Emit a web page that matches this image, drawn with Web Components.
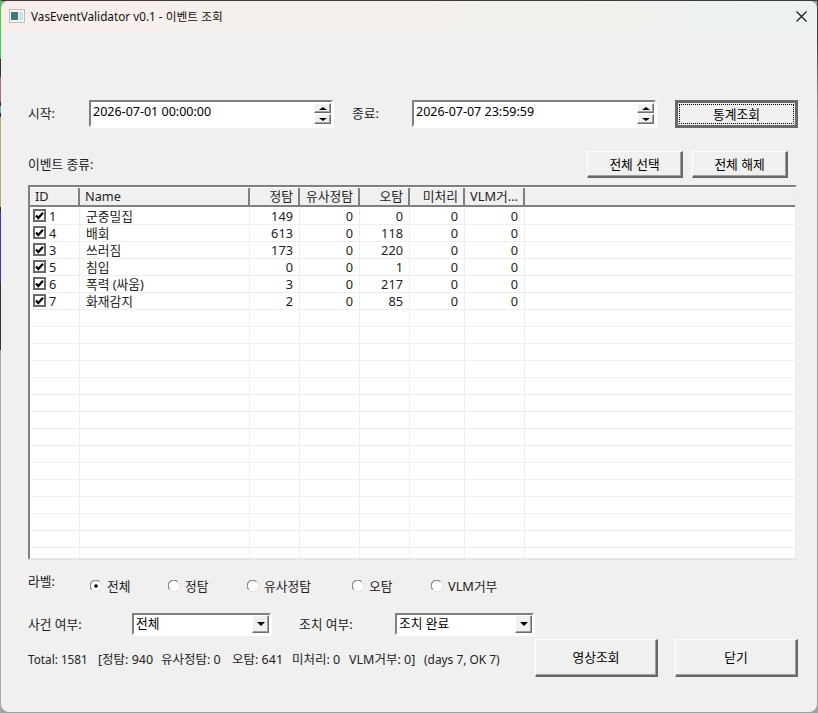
<!DOCTYPE html>
<html>
<head>
<meta charset="utf-8">
<title>VasEventValidator</title>
<style>
    html, body { margin: 0; height: 100%; overflow: hidden; }
    body {
        background:
            linear-gradient(to bottom, #3ecf3e 0 59px, #333 59px 77px, #b56a6a 77px 102px, #333 102px 106px, #5fb8c0 106px 113px, #333 113px 117px, #b8ac60 117px 207px, #333 207px 212px, #3a3ac8 212px 282px, #333 282px 350px, #a8a8a8 350px) left top / 1px 100% no-repeat,
            linear-gradient(#3a3a3a, #3a3a3a) left top / 100% 1px no-repeat,
            linear-gradient(to bottom, #444 0 40px, #a0a0a0 120px) right top / 1px 100% no-repeat,
            #a0a0a0;
    }
</style>
</head>
<body>
<event-window></event-window>
<script>
const font = `"Noto Sans", "Noto Sans CJK KR", sans-serif`;

// raised / sunken win95 edges, shared by the controls
const edges = `
    .raised { background: #f0f0f0; border: 1px solid; border-color: #fff #6d6d6d #6d6d6d #fff; box-shadow: inset -1px -1px 0 #a0a0a0; }
    .sunken { background: #fff; border: 2px solid; border-color: #808080 #fff #fff #808080; box-shadow: 1px 1px 0 #fff; }
`;

class WinButton extends HTMLElement {
    constructor() {
        super();
        const w = this.getAttribute('w');
        const h = this.getAttribute('h');
        this.attachShadow({ mode: 'open' }).innerHTML = `
        <style>
            :host { display: block; width: ${w}px; height: ${h}px; flex: none; }
            .b {
                box-sizing: border-box; width: 100%; height: 100%;
                display: flex; align-items: center; justify-content: center;
                background: #f0f0f0; color: #000;
                border: 2px solid; border-color: #fff #696969 #696969 #fff;
                border-top-width: 1px; border-left-width: 1px;
                box-shadow: inset -1px -1px 0 #a0a0a0;
            }
            :host([focused]) .b { border: 3px solid #696969; box-shadow: none; position: relative; }
            :host([focused]) .b::after { content: ""; position: absolute; inset: 1px; border: 1px dotted #000; }
        </style>
        <div class="b"><slot></slot></div>`;
    }
}
customElements.define('win-button', WinButton);

class DateSpin extends HTMLElement {
    constructor() {
        super();
        this.attachShadow({ mode: 'open' }).innerHTML = `
        <style>
            ${edges}
            :host { display: block; width: 244px; height: 27px; flex: none; font-size: 12.5px; }
            .box { box-sizing: border-box; height: 100%; display: flex; justify-content: space-between; padding-left: 2px; line-height: 19px; }
            .spin { width: 17px; display: flex; flex-direction: column; gap: 1px; margin: 1px 0 0; }
            .arrow { box-sizing: border-box; height: 10px; display: flex; align-items: center; justify-content: center; }
            i { width: 0; height: 0; border-style: solid; border-color: transparent; }
            .up i { border-width: 0 4px 3px; border-bottom-color: #000; }
            .dn i { border-width: 3px 4px 0; border-top-color: #000; }
        </style>
        <div class="box sunken">
            <span><slot></slot></span>
            <div class="spin">
                <div class="arrow raised up"><i></i></div>
                <div class="arrow raised dn"><i></i></div>
            </div>
        </div>`;
    }
}
customElements.define('date-spin', DateSpin);

class WinCombo extends HTMLElement {
    constructor() {
        super();
        this.attachShadow({ mode: 'open' }).innerHTML = `
        <style>
            ${edges}
            :host { display: block; width: 139px; height: 22px; flex: none; }
            .box { box-sizing: border-box; height: 100%; display: flex; justify-content: space-between; padding-left: 2px; line-height: 17px; }
            .arrow { box-sizing: border-box; width: 17px; height: 18px; display: flex; align-items: center; justify-content: center; }
            i { width: 0; height: 0; border-style: solid; border-color: #000 transparent transparent; border-width: 4px 4px 0; }
        </style>
        <div class="box sunken">
            <span><slot></slot></span>
            <div class="arrow raised"><i></i></div>
        </div>`;
    }
}
customElements.define('win-combo', WinCombo);

class WinRadio extends HTMLElement {
    constructor() {
        super();
        this.attachShadow({ mode: 'open' }).innerHTML = `
        <style>
            :host { display: flex; align-items: center; gap: 5px; flex: none; }
            svg { display: block; width: 12px; height: 12px; }
        </style>
        <svg viewBox="0 0 12 12">
            <circle cx="6" cy="6" r="5.5" fill="#fff"/>
            <path d="M1.8 9.5A5.3 5.3 0 0 1 9.5 1.8" fill="none" stroke="#808080" stroke-width="1.1"/>
            <path d="M10.2 2.5A5.3 5.3 0 0 1 2.5 10.2" fill="none" stroke="#e4e4e4" stroke-width="1.1"/>
            ${this.hasAttribute('checked') ? '<circle cx="6" cy="6" r="1.8" fill="#000"/>' : ''}
        </svg>
        <span><slot></slot></span>`;
    }
}
customElements.define('win-radio', WinRadio);

const rows = [
    ['1', '군중밀집', 149, 0, 0, 0, 0],
    ['4', '배회', 613, 0, 118, 0, 0],
    ['3', '쓰러짐', 173, 0, 220, 0, 0],
    ['5', '침입', 0, 0, 1, 0, 0],
    ['6', '폭력 (싸움)', 3, 0, 217, 0, 0],
    ['7', '화재감지', 2, 0, 85, 0, 0],
];

class EventList extends HTMLElement {
    constructor() {
        super();
        const cols = '50px 170px 50px 60px 50px 55px 60px 1fr';
        const heads = ['ID', 'Name', '정탐', '유사정탐', '오탐', '미처리', 'VLM거...', ''];
        let body = '';
        for (let i = 0; i < 21; i++) {
            const r = rows[i];
            body += `<div class="row">`;
            if (r) {
                body += `<div class="c id"><svg viewBox="0 0 13 13"><rect x="1" y="1" width="11" height="11" fill="#fff" stroke="#696969" stroke-width="2"/><path d="M3 6.5 5.3 9 10 3.8" fill="none" stroke="#000" stroke-width="2.2"/></svg><span>${r[0]}</span></div>`;
                body += `<div class="c">${r[1]}</div>`;
                for (let j = 2; j < 7; j++) body += `<div class="c n">${r[j]}</div>`;
            } else {
                for (let j = 0; j < 7; j++) body += `<div class="c"></div>`;
            }
            body += `<div class="c"></div></div>`;
        }
        this.attachShadow({ mode: 'open' }).innerHTML = `
        <style>
            :host { display: block; height: 375px; box-sizing: border-box; border: 2px solid; border-color: #808080 #eee #e6e6e6 #808080; background: #fff; overflow: hidden; }
            .head, .row { display: grid; grid-template-columns: ${cols}; }
            .head { height: 20px; box-sizing: border-box; background: #f0f0f0; border-bottom: 2px solid #808080; border-top: 1px solid #fff; margin-bottom: 1px; }
            .h { padding: 0 5px; line-height: 17px; border-right: 2px solid #808080; white-space: nowrap; overflow: hidden; }
            .h.r { text-align: right; padding: 0 5px 0 0; }
            .h:last-child { border-right: 0; }
            .row { height: 17px; box-sizing: border-box; border-bottom: 1px solid #eee; }
            .c { border-right: 1px solid #eee; line-height: 16px; padding-left: 6px; white-space: nowrap; }
            .c.id { display: flex; align-items: flex-start; gap: 3px; padding-left: 3px; }
            .c.n { text-align: right; padding: 0 6px 0 0; }
            .c:last-child { border-right: 0; }
            svg { width: 13px; height: 13px; flex: none; margin-top: 1px; }
        </style>
        <div class="head">${heads.map((h, i) => `<div class="h ${i > 1 ? 'r' : ''}">${h}</div>`).join('')}</div>
        ${body}`;
    }
}
customElements.define('event-list', EventList);

const windowTemplate = document.createElement('template');
windowTemplate.innerHTML = `
<style>
    :host {
        display: flex; flex-direction: column; box-sizing: border-box;
        height: 711px; margin: 1px; overflow: hidden;
        background: #f0f0f0; border-radius: 8px;
        font: 12.75px/17px ${font}; color: #222;
    }
    .title { height: 30px; flex: none; display: flex; align-items: center; justify-content: space-between; padding: 0 10px 0 8px; background: linear-gradient(to right, #f8efec, #f4f0ec 50%, #ecf3ef); color: #111; font-size: 11.75px; }
    .title span { display: flex; align-items: center; gap: 6px; }
    .title svg { display: block; }
    .main { flex: 1; display: flex; flex-direction: column; padding: 69px 19px 0 27px; }
    .row { display: flex; align-items: center; }
    .time { align-items: flex-start; height: 28px; }
    .time .lbl { margin-top: 5px; }
    .ev { margin-top: 23px; height: 27px; justify-content: space-between; padding-right: 10px; }
    .ev div { display: flex; gap: 9px; }
    event-list { margin: 7px 1px 0 0; }
    .radios { margin-top: 17px; height: 18px; }
    .combos { margin-top: 18px; height: 22px; }
    .foot { margin-top: 4px; height: 38px; justify-content: space-between; }
    .status { display: flex; margin-top: 2px; white-space: nowrap; font-size: 12.5px; }
    .dark { color: #000; }
</style>
<div class="title">
    <span>
        <svg width="16" height="14" viewBox="0 0 16 14"><rect x=".5" y=".5" width="15" height="13" fill="#f4f4f4" stroke="#bbb"/><rect x="2" y="3" width="7" height="8" fill="#3d7a80"/><rect x="10" y="3" width="4" height="8" fill="#cfe0e6"/></svg>
        VasEventValidator v0.1 - 이벤트 조회
    </span>
    <svg width="11" height="11" viewBox="0 0 11 11"><path d="M.5.5l10 10M10.5.5l-10 10" stroke="#111" stroke-width="1.1" fill="none"/></svg>
</div>
<div class="main">
    <div class="row time">
        <div class="lbl" style="width:61px">시작:</div>
        <date-spin class="dark">2026-07-01 00:00:00</date-spin>
        <div class="lbl" style="width:60px;margin-left:19px">종료:</div>
        <date-spin class="dark">2026-07-07 23:59:59</date-spin>
        <win-button focused w="123" h="28" class="dark" style="margin-left:19px">통계조회</win-button>
    </div>
    <div class="row ev">
        <span>이벤트 종류:</span>
        <div>
            <win-button w="96" h="27" class="dark">전체 선택</win-button>
            <win-button w="96" h="27" class="dark">전체 해제</win-button>
        </div>
    </div>
    <event-list></event-list>
    <div class="row radios">
        <span style="width:62px;margin-top:-10px">라벨:</span>
        <win-radio checked style="width:78px">전체</win-radio>
        <win-radio style="width:79px">정탐</win-radio>
        <win-radio style="width:105px">유사정탐</win-radio>
        <win-radio style="width:79px">오탐</win-radio>
        <win-radio>VLM거부</win-radio>
    </div>
    <div class="row combos">
        <span style="width:104px">사건 여부:</span>
        <win-combo class="dark">전체</win-combo>
        <span style="width:96px;margin-left:28px">조치 여부:</span>
        <win-combo class="dark">조치 완료</win-combo>
    </div>
    <div class="row foot">
        <div class="status">
            <span style="width:70px;font-size:11.75px">Total: 1581</span>
            <span style="width:63px">[정탐: 940</span>
            <span style="width:71px">유사정탐: 0</span>
            <span style="width:60px">오탐: 641</span>
            <span style="width:57px">미처리: 0</span>
            <span style="width:75px">VLM거부: 0]</span>
            <span style="font-size:11.9px">(days 7, OK 7)</span>
        </div>
        <div class="row" style="gap:17px">
            <win-button w="123" h="38" class="dark">영상조회</win-button>
            <win-button w="123" h="38" class="dark">닫기</win-button>
        </div>
    </div>
</div>`;

class EventWindow extends HTMLElement {
    constructor() {
        super();
        this.attachShadow({ mode: 'open' }).append(windowTemplate.content.cloneNode(true));
    }
}
customElements.define('event-window', EventWindow);
</script>
</body>
</html>
